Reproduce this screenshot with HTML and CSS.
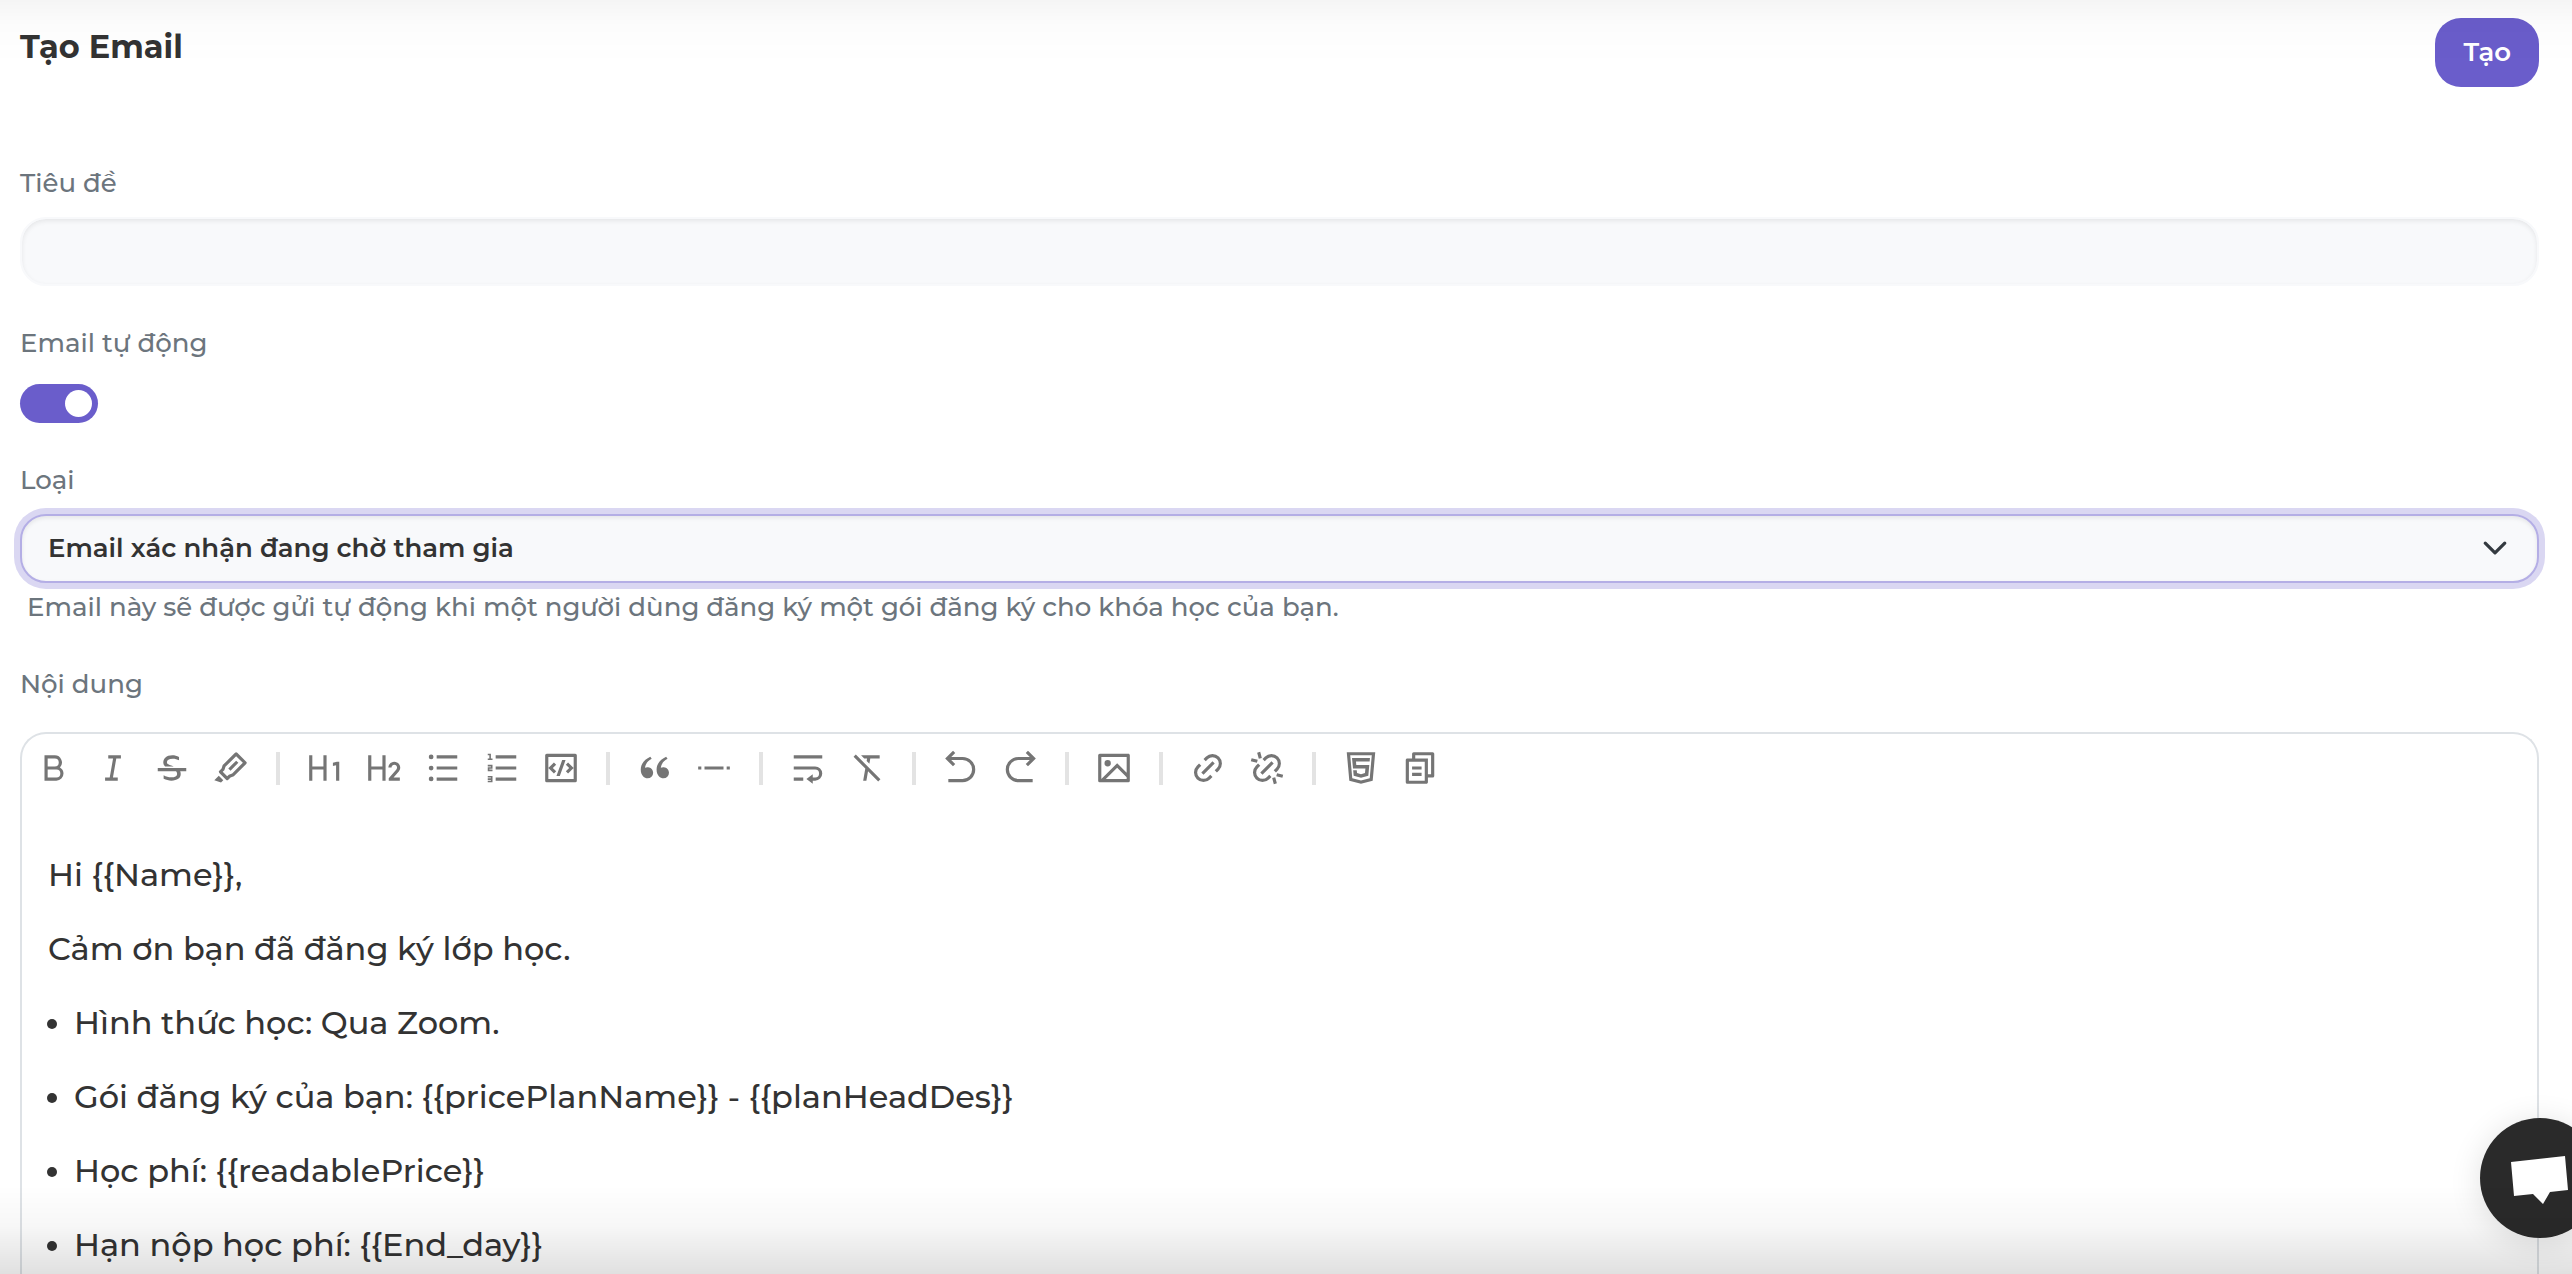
FILE: index.html
```html
<!DOCTYPE html>
<html lang="vi">
<head>
<meta charset="utf-8">
<meta name="viewport" content="width=device-width, initial-scale=1">
<title>Tạo Email</title>
<link rel="stylesheet" href="styles.css">
</head>
<body>
<main class="page">
  <header class="page-header">
    <h1 class="page-title">Tạo Email</h1>
    <button class="btn-primary" type="submit" form="email-form">Tạo</button>
  </header>

  <form class="form" id="email-form">
    <div class="field">
      <label class="label" for="subject">Tiêu đề</label>
      <input class="control" id="subject" type="text">
    </div>

    <div class="field field-switch">
      <label class="label" for="auto">Email tự động</label>
      <input class="switch" id="auto" type="checkbox" role="switch" checked>
    </div>

    <div class="field">
      <label class="label" for="type">Loại</label>
      <div class="select-wrap">
        <select class="control select" id="type" aria-describedby="type-help">
          <option selected>Email xác nhận đang chờ tham gia</option>
        </select>
        <svg class="chevron" viewBox="0 0 16 16" aria-hidden="true"><path d="M2 5l6 6 6-6"/></svg>
      </div>
      <p class="help" id="type-help">Email này sẽ được gửi tự động khi một người dùng đăng ký một gói đăng ký cho khóa học của bạn.</p>
    </div>

    <div class="field field-editor">
      <span class="label" id="content-label">Nội dung</span>
      <div class="editor">
        <div class="toolbar" role="toolbar" aria-labelledby="content-label">
          <button class="tool" type="button" aria-label="Bold"><svg viewBox="0 0 24 24"><path d="M8 11h4.500a2.500 2.500 0 1 0 0-5H8v5zm10 4.500a4.500 4.500 0 0 1-4.500 4.500H6V4h6.500a4.500 4.500 0 0 1 3.256 7.606A4.498 4.498 0 0 1 18 15.500zM8 13v5h5.500a2.500 2.500 0 1 0 0-5H8z"/></svg></button>
          <button class="tool" type="button" aria-label="Italic"><svg viewBox="0 0 24 24"><path d="M15 20H7v-2h2.927l2.116-12H9V4h8v2h-2.927l-2.116 12H15z"/></svg></button>
          <button class="tool" type="button" aria-label="Strikethrough"><svg viewBox="0 0 24 24"><path d="M17.154 14c.23.516.346 1.09.346 1.72 0 1.342-.524 2.392-1.571 3.147C14.88 19.622 13.433 20 11.586 20c-1.64 0-3.263-.381-4.870-1.144V16.600c1.520.877 3.075 1.316 4.666 1.316 2.551 0 3.830-.732 3.839-2.197a2.210 2.210 0 0 0-.648-1.603l-.120-.117H3v-2h18v2h-3.846zm-4.078-3H7.629a4.086 4.086 0 0 1-.481-.522C6.716 9.920 6.500 9.246 6.500 8.452c0-1.236.466-2.287 1.397-3.153C8.830 4.433 10.271 4 12.222 4c1.471 0 2.879.328 4.222.984v2.152c-1.200-.687-2.515-1.030-3.946-1.030-2.480 0-3.719.782-3.719 2.346 0 .420.218.786.654 1.099.436.313.974.562 1.613.750.620.180 1.297.414 2.030.699z"/></svg></button>
          <button class="tool" type="button" aria-label="Highlight"><svg viewBox="0 0 24 24"><path d="M15.243 4.515l-6.738 6.737-.707 2.121-1.040 1.041 2.828 2.829 1.040-1.041 2.122-.707 6.737-6.738-4.242-4.242zm6.364 3.535a1 1 0 0 1 0 1.414l-7.779 7.779-2.120.707-1.415 1.414a1 1 0 0 1-1.414 0l-4.243-4.243a1 1 0 0 1 0-1.414l1.414-1.414.707-2.121 7.779-7.779a1 1 0 0 1 1.414 0l5.657 5.657zm-6.364-.707l1.414 1.414-4.950 4.950-1.414-1.414 4.950-4.950zM4.283 16.890l2.828 2.829-1.414 1.414-4.243-1.414 2.828-2.829z"/></svg></button>
          <span class="divider"></span>
          <button class="tool" type="button" aria-label="Heading 1"><svg viewBox="0 0 24 24"><path d="M13 20h-2v-7H4v7H2V4h2v7h7V4h2v16zm8-12v12h-2v-9.796l-2 .536V8.670L19.500 8H21z"/></svg></button>
          <button class="tool" type="button" aria-label="Heading 2"><svg viewBox="0 0 24 24"><path d="M4 4v7h7V4h2v16h-2v-7H4v7H2V4h2zm14.500 4c2.071 0 3.750 1.679 3.750 3.750 0 .857-.288 1.648-.772 2.280l-.148.180L18.034 18H22v2h-7v-1.556l4.820-5.546c.268-.307.430-.709.430-1.148 0-.966-.784-1.750-1.750-1.750-.918 0-1.671.707-1.744 1.606l-.006.144h-2C14.750 9.679 16.429 8 18.500 8z"/></svg></button>
          <button class="tool" type="button" aria-label="Bullet list"><svg viewBox="0 0 24 24"><path d="M8 4h13v2H8V4zM4.500 6.500a1.500 1.500 0 1 1 0-3 1.500 1.500 0 0 1 0 3zm0 7a1.500 1.500 0 1 1 0-3 1.500 1.500 0 0 1 0 3zm0 6.900a1.500 1.500 0 1 1 0-3 1.500 1.500 0 0 1 0 3zM8 11h13v2H8v-2zm0 7h13v2H8v-2z"/></svg></button>
          <button class="tool" type="button" aria-label="Ordered list"><svg viewBox="0 0 24 24"><path d="M8 4h13v2H8V4zM5 3v3h1v1H3V6h1V4H3V3h2zM3 14v-2.500h2V11H3v-1h3v2.500H4v.500h2v1H3zm2 5.500H3v-1h2V18H3v-1h3v4H3v-1h2v-.500zM8 11h13v2H8v-2zm0 7h13v2H8v-2z"/></svg></button>
          <button class="tool" type="button" aria-label="Code block"><svg viewBox="0 0 24 24"><path d="M3 3h18a1 1 0 0 1 1 1v16a1 1 0 0 1-1 1H3a1 1 0 0 1-1-1V4a1 1 0 0 1 1-1zm1 2v14h16V5H4zm16 7l-3.536 3.536-1.414-1.415L17.172 12 15.050 9.879l1.414-1.415L20 12zM6.828 12l2.122 2.121-1.414 1.415L4 12l3.536-3.536L8.950 9.880 6.828 12zm4.416 5H9.116l3.640-10h2.128l-3.640 10z"/></svg></button>
          <span class="divider"></span>
          <button class="tool" type="button" aria-label="Quote"><svg viewBox="0 0 24 24"><path d="M4.583 17.321C3.553 16.227 3 15 3 13.011c0-3.500 2.457-6.637 6.030-8.188l.893 1.378c-3.335 1.804-3.987 4.145-4.247 5.621.537-.278 1.240-.375 1.929-.311 1.804.167 3.226 1.648 3.226 3.489a3.500 3.500 0 0 1-3.500 3.500c-1.073 0-2.099-.490-2.748-1.179zm10 0C13.553 16.227 13 15 13 13.011c0-3.500 2.457-6.637 6.030-8.188l.893 1.378c-3.335 1.804-3.987 4.145-4.247 5.621.537-.278 1.240-.375 1.929-.311 1.804.167 3.226 1.648 3.226 3.489a3.500 3.500 0 0 1-3.500 3.500c-1.073 0-2.099-.490-2.748-1.179z"/></svg></button>
          <button class="tool" type="button" aria-label="Horizontal rule"><svg viewBox="0 0 24 24"><path d="M2 11h2v2H2v-2zm4 0h12v2H6v-2zm14 0h2v2h-2v-2z"/></svg></button>
          <span class="divider"></span>
          <button class="tool" type="button" aria-label="Line break"><svg viewBox="0 0 24 24"><path d="M15 18h1.500a2.500 2.500 0 1 0 0-5H3v-2h13.500a4.500 4.500 0 1 1 0 9H15v2l-4-3 4-3v2zM3 4h18v2H3V4zm6 14v2H3v-2h6z"/></svg></button>
          <button class="tool" type="button" aria-label="Clear format"><svg viewBox="0 0 24 24"><path d="M12.651 14.065L11.605 20H9.574l1.350-7.661-7.410-7.410L4.930 3.515 20.485 19.070l-1.414 1.414-6.420-6.420zm-.878-6.535l.270-1.530h-1.800l-2-2H20v2h-5.927L13.500 9.257 11.773 7.530z"/></svg></button>
          <span class="divider"></span>
          <button class="tool" type="button" aria-label="Undo"><svg viewBox="0 0 24 24"><path d="M5.828 7l2.536 2.536L6.950 10.950 2 6l4.950-4.950 1.414 1.414L5.828 5H13a8 8 0 1 1 0 16H4v-2h9a6 6 0 1 0 0-12H5.828z"/></svg></button>
          <button class="tool" type="button" aria-label="Redo"><svg viewBox="0 0 24 24"><path d="M18.172 7H11a6 6 0 1 0 0 12h9v2h-9a8 8 0 1 1 0-16h7.172l-2.536-2.536L17.050 1.050 22 6l-4.950 4.950-1.414-1.414L18.172 7z"/></svg></button>
          <span class="divider"></span>
          <button class="tool" type="button" aria-label="Image"><svg viewBox="0 0 24 24"><path d="M4.828 21l-.020.020-.021-.020H2.992A.993.993 0 0 1 2 20.007V3.993A1 1 0 0 1 2.992 3h18.016c.548 0 .992.445.992.993v16.014a1 1 0 0 1-.992.993H4.828zM20 15V5H4v14L14 9l6 6zm0 2.828l-6-6L6.828 19H20v-1.172zM8 11a2 2 0 1 1 0-4 2 2 0 0 1 0 4z"/></svg></button>
          <span class="divider"></span>
          <button class="tool" type="button" aria-label="Link"><svg viewBox="0 0 24 24"><path d="M17.657 14.828l-1.414-1.414L17.657 12A4 4 0 1 0 12 6.343l-1.414 1.414-1.414-1.414 1.414-1.414a6 6 0 0 1 8.485 8.485l-1.414 1.414zm-2.829 2.829l-1.414 1.414a6 6 0 1 1-8.485-8.485l1.414-1.414 1.414 1.414L6.343 12A4 4 0 1 0 12 17.657l1.414-1.414 1.414 1.414zm0-9.900l1.415 1.415-7.071 7.070-1.415-1.414 7.071-7.070z"/></svg></button>
          <button class="tool" type="button" aria-label="Unlink"><svg viewBox="0 0 24 24"><path d="M17.657 14.828l-1.414-1.414L17.657 12A4 4 0 1 0 12 6.343l-1.414 1.414-1.414-1.414 1.414-1.414a6 6 0 0 1 8.485 8.485l-1.414 1.414zm-2.829 2.829l-1.414 1.414a6 6 0 1 1-8.485-8.485l1.414-1.414 1.414 1.414L6.343 12A4 4 0 1 0 12 17.657l1.414-1.414 1.414 1.414zm0-9.900l1.415 1.415-7.071 7.070-1.415-1.414 7.071-7.070zM5.775 2.293l1.932-.518L8.742 5.640l-1.931.518-1.036-3.864zm9.483 16.068l1.931-.518 1.036 3.864-1.932.518-1.035-3.864zM2.293 5.775l3.864 1.036-.518 1.931-3.864-1.035.518-1.932zm16.068 9.483l3.864 1.035-.518 1.932-3.864-1.036.518-1.931z"/></svg></button>
          <span class="divider"></span>
          <button class="tool" type="button" aria-label="HTML"><svg viewBox="0 0 24 24"><path d="M12 18.178l4.620-1.256.623-6.778H9.026L8.822 7.890h8.626l.227-2.211H6.325l.636 6.678h7.820l-.261 2.866-2.520.667-2.520-.667-.158-1.844h-2.270l.329 3.544L12 18.178zM3 2h18l-1.623 18L12 22l-7.377-2L3 2zm2.188 2L6.490 18.434 12 19.928l5.510-1.494L18.812 4H5.188z"/></svg></button>
          <button class="tool" type="button" aria-label="Copy"><svg viewBox="0 0 24 24"><path d="M7 6V3a1 1 0 0 1 1-1h12a1 1 0 0 1 1 1v14a1 1 0 0 1-1 1h-3v3c0 .552-.450 1-1.007 1H4.007A1.001 1.001 0 0 1 3 21l.003-14c0-.552.450-1 1.007-1H7zM5.003 8L5 20h10V8H5.003zM9 6h8v10h2V4H9v2zm-2 5h6v2H7v-2zm0 4h6v2H7v-2z"/></svg></button>
        </div>
        <div class="content" contenteditable="true" role="textbox" aria-multiline="true" aria-labelledby="content-label" spellcheck="false">
          <p>Hi {{Name}},</p>
          <p>Cảm ơn bạn đã đăng ký lớp học.</p>
          <ul>
            <li>Hình thức học: Qua Zoom.</li>
            <li>Gói đăng ký của bạn: {{pricePlanName}} - {{planHeadDes}}</li>
            <li>Học phí: {{readablePrice}}</li>
            <li>Hạn nộp học phí: {{End_day}}</li>
          </ul>
        </div>
      </div>
    </div>
  </form>
</main>

<button class="chat" type="button" aria-label="Chat">
  <svg viewBox="0 0 120 120" aria-hidden="true"><path d="M31 44l54-6 3 34-18 2-7 12-10-10-19 2z"/></svg>
</button>
</body>
</html>
```

FILE: styles.css
```css
* {
  box-sizing: border-box;
}

body {
  margin: 0;
  background: #fff;
  color: #333;
  font-family: Montserrat, Inter, "Open Sans", sans-serif;
  font-size: 26px;
  font-weight: 500;
  line-height: 39px;
}

/* Soft shade along the top and bottom edges of the window */
body::before,
body::after {
  content: "";
  position: fixed;
  left: 0;
  right: 0;
  z-index: 3;
  pointer-events: none;
}

body::before {
  top: 0;
  height: 64px;
  background: linear-gradient(rgba(0, 0, 0, .04), rgba(0, 0, 0, .01) 40%, transparent);
}

body::after {
  bottom: 0;
  height: 88px;
  background: linear-gradient(transparent, rgba(0, 0, 0, .03) 45%, rgba(0, 0, 0, .12));
}

.page {
  display: flex;
  flex-direction: column;
  height: 100vh;
  padding: 18px 33px 0 20px;
  overflow: hidden;
}

.page-header {
  display: flex;
  justify-content: space-between;
  align-items: flex-start;
  margin-bottom: 77px;
}

.page-title {
  margin: 0;
  font-size: 32px;
  font-weight: 700;
  line-height: 57px;
}

.btn-primary {
  height: 69px;
  padding: 0 28px;
  border: 0;
  border-radius: 26px;
  background: #6a5dcb;
  color: #fff;
  font: inherit;
  font-weight: 600;
}

.form {
  display: flex;
  flex: 1;
  flex-direction: column;
  gap: 38px;
}

.field {
  display: flex;
  flex-direction: column;
  gap: 14px;
}

.field-switch {
  gap: 21px;
}

.field-editor {
  flex: 1;
  gap: 28px;
}

.label,
.help {
  color: #6c757d;
}

.label {
  align-self: flex-start;
}

.help {
  margin: -9px 0 0;
  padding-left: 7px;
}

.control {
  width: 100%;
  height: 69px;
  padding: 0 26px;
  border: 2px solid #f8f9fb;
  border-radius: 26px;
  outline: 0;
  background: #f8f9fb;
  box-shadow: inset 0 2px 5px rgba(0, 0, 0, .08);
  color: #333;
  font: inherit;
}

.select-wrap {
  position: relative;
}

.select {
  display: block;
  appearance: none;
  border-color: #b4aee5;
  box-shadow: inset 0 2px 4px rgba(0, 0, 0, .08), 0 0 0 6px #dad7f2;
  font-weight: 600;
}

.chevron {
  position: absolute;
  top: 21px;
  right: 31px;
  width: 26px;
  height: 26px;
  fill: none;
  stroke: #343a40;
  stroke-width: 2;
  stroke-linecap: round;
  stroke-linejoin: round;
  pointer-events: none;
}

.switch {
  display: flex;
  align-items: center;
  justify-content: flex-end;
  width: 78px;
  height: 39px;
  margin: 0;
  padding: 0 6px;
  border-radius: 20px;
  appearance: none;
  background: #6a5dcb;
}

.switch::before {
  content: "";
  width: 27px;
  height: 27px;
  border-radius: 50%;
  background: #fff;
}

.switch:not(:checked) {
  justify-content: flex-start;
  background: #ced4da;
}

.editor {
  flex: 1;
  border: 2px solid #dee2e6;
  border-bottom: 0;
  border-radius: 26px 26px 0 0;
}

.toolbar {
  display: flex;
  align-items: center;
  gap: 21px;
  padding: 15px 13px 0;
}

.tool {
  flex: none;
  width: 38px;
  height: 38px;
  padding: 0;
  border: 0;
  background: none;
}

.tool svg {
  display: block;
  width: 38px;
  height: 38px;
  fill: #757575;
}

.divider {
  width: 4px;
  height: 33px;
  margin: 0 5px;
  background: #e3e3e3;
}

.content {
  padding: 64px 26px 0;
  outline: 0;
  font-size: 32px;
  line-height: 48px;
}

.content p,
.content ul {
  margin: 0 0 26px;
}

.content ul {
  padding-left: 26px;
}

.content li {
  margin-bottom: 26px;
}

.chat {
  position: fixed;
  right: -28px;
  bottom: 36px;
  z-index: 2;
  width: 120px;
  height: 120px;
  padding: 0;
  border: 0;
  border-radius: 50%;
  background: #2a2a2a;
  box-shadow: 0 4px 32px rgba(0, 0, 0, .12);
}

.chat svg {
  display: block;
  width: 120px;
  height: 120px;
  fill: #fff;
}
```
